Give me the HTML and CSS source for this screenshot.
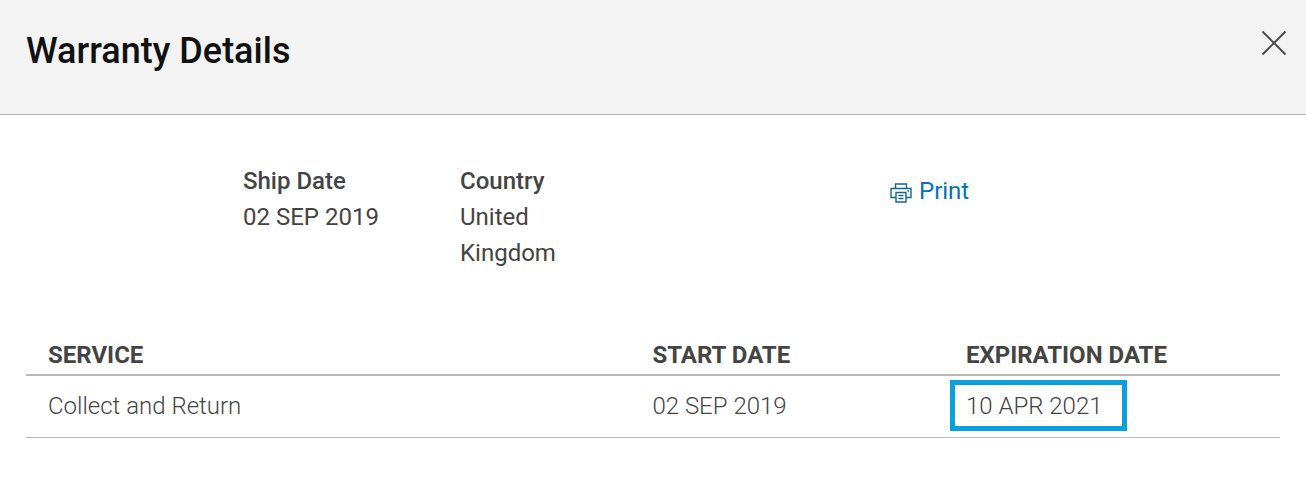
FILE: index.html
```html
<!DOCTYPE html>
<html lang="en">
<head>
<meta charset="utf-8">
<title>Warranty Details</title>
<link rel="stylesheet" href="styles.css">
</head>
<body>
<header class="header">
  <h1 class="title">Warranty Details</h1>
  <button class="close" type="button" aria-label="Close">
    <svg width="26" height="26" viewBox="0 0 26 26" fill="none" stroke="#444" stroke-width="1.8" aria-hidden="true"><path d="M1.5 1.5l23 23M24.5 1.5l-23 23"/></svg>
  </button>
</header>
<main class="content">
  <section class="summary">
    <dl class="field field-ship">
      <dt>Ship Date</dt>
      <dd>02 SEP 2019</dd>
    </dl>
    <dl class="field">
      <dt>Country</dt>
      <dd>United Kingdom</dd>
    </dl>
    <a class="print" href="#print">
      <svg width="22" height="20" viewBox="0 0 22 20" fill="none" stroke="currentColor" stroke-width="1.4" aria-hidden="true">
        <path d="M5.5 5V1h11v4M6 14.5H1V5.5h20v9h-5"/>
        <path d="M6 9.5h10V19H6zM8.5 12.5h5M8.5 15.5h5"/>
        <path d="M17.5 8h1.5"/>
      </svg>
      <span>Print</span>
    </a>
  </section>
  <table class="services">
    <thead>
      <tr><th class="col-service" scope="col">SERVICE</th><th class="col-start" scope="col">START DATE</th><th scope="col">EXPIRATION DATE</th></tr>
    </thead>
    <tbody>
      <tr><td>Collect and Return</td><td>02 SEP 2019</td><td><span class="highlight">10 APR 2021</span></td></tr>
    </tbody>
  </table>
</main>
</body>
</html>
```
FILE: styles.css
```css
* {
  box-sizing: border-box;
}

body {
  margin: 0;
  background: #fff;
  color: #444;
  font: 400 24px/36px Roboto, sans-serif;
}

.header {
  display: flex;
  justify-content: space-between;
  align-items: flex-start;
  padding: 27px 19px 39px 26px;
  background: #f3f3f3;
  border-bottom: 1px solid #b8b8b8;
}

.title {
  margin: 0;
  color: #111;
  font-size: 36px;
  font-weight: 500;
  line-height: 48px;
}

.close {
  display: flex;
  margin: 3px 0 0;
  padding: 0;
  border: 0;
  background: none;
  cursor: pointer;
}

.content {
  padding: 48px 26px;
}

.summary {
  display: grid;
  grid-template-columns: 217fr 217fr 217fr 213fr 390fr;
  align-items: start;
}

.field {
  margin: 0;
  padding-right: 60px;
}

.field-ship {
  grid-column: 2;
  padding-right: 0;
}

.field dt {
  font-weight: 500;
}

.field dd {
  margin: 0;
}

.print {
  display: flex;
  grid-column: 5;
  gap: 7px;
  align-items: center;
  padding-top: 10px;
  color: #0672b0;
  text-decoration: none;
}

.print svg {
  margin-top: 3px;
  color: #12668f;
}

.services {
  width: 100%;
  margin-top: 66px;
  border-collapse: separate;
  border-spacing: 0;
  table-layout: fixed;
  text-align: left;
}

.col-service {
  width: 48.2%;
}

.col-start {
  width: 25%;
}

.services th {
  padding: 0 22px 1px;
  border-bottom: 2px solid #b8b8b8;
  font-weight: 700;
}

.services td {
  padding: 12px 22px 13px;
  border-bottom: 1px solid #b8b8b8;
  font-weight: 300;
}

.highlight {
  display: inline-block;
  margin: -8px 0 -8px -16px;
  padding: 3px 19px 2px 11px;
  border: 5px solid #0aa0de;
  vertical-align: top;
}
```
